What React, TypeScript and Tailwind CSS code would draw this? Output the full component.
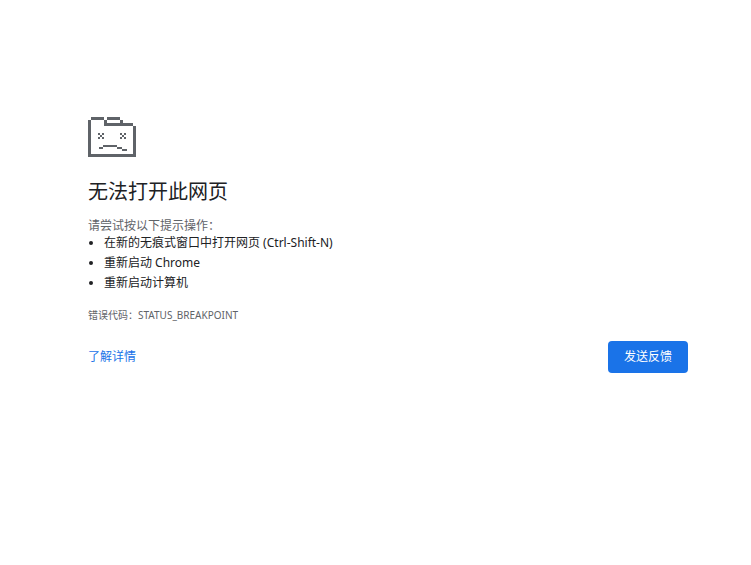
function SadTabIcon() {
  return (
    <svg width="48" height="40" viewBox="0 0 48 40" fill="#5f6368" shapeRendering="crispEdges" className="block">
      {/* folder outline */}
      <rect x="3" y="0" width="13" height="3" />
      <rect x="19" y="0" width="13" height="3" />
      <rect x="0" y="3" width="3" height="37" />
      <rect x="16" y="3" width="3" height="3" />
      <rect x="32" y="3" width="3" height="3" />
      <rect x="16" y="6" width="29" height="3" />
      <rect x="45" y="9" width="3" height="31" />
      <rect x="3" y="37" width="42" height="3" />
      {/* left eye */}
      <rect x="10" y="16" width="2" height="2" />
      <rect x="14" y="16" width="2" height="2" />
      <rect x="12" y="18" width="2" height="2" />
      <rect x="10" y="20" width="2" height="2" />
      <rect x="14" y="20" width="2" height="2" />
      {/* right eye */}
      <rect x="32" y="16" width="2" height="2" />
      <rect x="36" y="16" width="2" height="2" />
      <rect x="34" y="18" width="2" height="2" />
      <rect x="32" y="20" width="2" height="2" />
      <rect x="36" y="20" width="2" height="2" />
      {/* mouth */}
      <rect x="15" y="28" width="14" height="2" />
      <rect x="11" y="30" width="4" height="2" />
      <rect x="29" y="30" width="5" height="2" />
      <rect x="34" y="32" width="5" height="2" />
    </svg>
  );
}

export default function App() {
  return (
    <div className="h-[565px] bg-white pt-[117px] pl-[88px] text-[12px] text-[#5f6368] font-['Noto_Sans','Noto_Sans_CJK_SC',sans-serif]">
      <div className="w-[600px]">
        <SadTabIcon />

        <h1 className="mt-[20px] text-[20px] leading-[30px] font-normal text-[#202124]">无法打开此网页</h1>

        <p className="mt-[12px] leading-[14px]">请尝试按以下提示操作：</p>
        <ul className="list-disc pl-[16px] text-[#202124]">
          <li className="h-[20px] leading-[20px]">在新的无痕式窗口中打开网页 (Ctrl-Shift-N)</li>
          <li className="h-[20px] leading-[20px]">重新启动 Chrome</li>
          <li className="h-[20px] leading-[20px]">重新启动计算机</li>
        </ul>

        <p className="mt-[14px] text-[10px] leading-[16px]">错误代码：STATUS_BREAKPOINT</p>

        <div className="mt-[18px] flex items-center justify-between">
          <a className="text-[#1a73e8]">了解详情</a>
          <button className="h-[32px] w-[80px] rounded-[4px] bg-[#1a73e8] text-[12px] text-white">发送反馈</button>
        </div>
      </div>
    </div>
  );
}
